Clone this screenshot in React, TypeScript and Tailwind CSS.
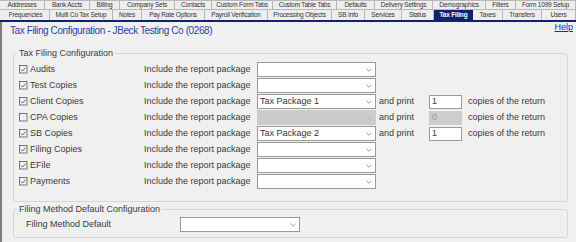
import React from 'react';

const topTabs = [
  { label: 'Addresses', w: 'w-[45px]' },
  { label: 'Bank Accts', w: 'w-[45px]' },
  { label: 'Billing', w: 'w-[30px]' },
  { label: 'Company Sets', w: 'w-[55px]' },
  { label: 'Contacts', w: 'w-[37px]' },
  { label: 'Custom Form Tabs', w: 'w-[61px]' },
  { label: 'Custom Table Tabs', w: 'w-[64px]' },
  { label: 'Defaults', w: 'w-[38px]' },
  { label: 'Delivery Settings', w: 'w-[58px]' },
  { label: 'Demographics', w: 'w-[53px]' },
  { label: 'Filters', w: 'w-[30px]' },
  { label: 'Form 1099 Setup', w: 'w-[60px]' },
];

const bottomTabs = [
  { label: 'Frequencies', w: 'w-[48px]' },
  { label: 'Multi Co Tax Setup', w: 'w-[63px]' },
  { label: 'Notes', w: 'w-[29px]' },
  { label: 'Pay Rate Options', w: 'w-[63px]' },
  { label: 'Payroll Verification', w: 'w-[63px]' },
  { label: 'Processing Objects', w: 'w-[64px]' },
  { label: 'SB Info', w: 'w-[33px]' },
  { label: 'Services', w: 'w-[37px]' },
  { label: 'Status', w: 'w-[32px]' },
  { label: 'Tax Filing', w: 'w-[39px]', active: true },
  { label: 'Taxes', w: 'w-[30px]' },
  { label: 'Transfers', w: 'w-[39px]' },
  { label: 'Users', w: 'w-[34px]' },
];

type Row = { label: string; checked: boolean; pkg?: string; copies?: string; disabled?: boolean };

const rows: Row[] = [
  { label: 'Audits', checked: true },
  { label: 'Test Copies', checked: true },
  { label: 'Client Copies', checked: true, pkg: 'Tax Package 1', copies: '1' },
  { label: 'CPA Copies', checked: false, disabled: true, copies: '0' },
  { label: 'SB Copies', checked: true, pkg: 'Tax Package 2', copies: '1' },
  { label: 'Filing Copies', checked: true },
  { label: 'EFile', checked: true },
  { label: 'Payments', checked: true },
];

const Chevron = ({ light }: { light?: boolean }) => (
  <svg width="6" height="4" viewBox="0 0 6 4" className="shrink-0">
    <path d="M0.5 0.8 L3 3.2 L5.5 0.8" fill="none" stroke={light ? '#b4b4b4' : '#7a7a7a'} strokeWidth="0.8" />
  </svg>
);

const Check = ({ checked }: { checked: boolean }) => (
  <svg width="9" height="9" viewBox="0 0 9 9" className="shrink-0">
    <rect x="0.5" y="0.5" width="7.5" height="7.5" fill="none" stroke="#555" strokeWidth="0.8" />
    {checked && <path d="M2 4.4 L3.6 6 L6.6 2.6" fill="none" stroke="#444" strokeWidth="0.8" />}
  </svg>
);

const Select = ({ value, disabled, w }: { value?: string; disabled?: boolean; w: string }) => (
  <div
    className={`${w} h-[15px] flex items-center justify-between pl-[2px] pr-[3px] border ${
      disabled ? 'bg-[#cccccc] border-[#cccccc]' : 'bg-white border-[#999999]'
    }`}
  >
    <span className="text-[9px] leading-none text-[#333]">{value}</span>
    <Chevron light={disabled} />
  </div>
);

export default function App() {
  return (
    <div className="w-[576px] h-[242px] bg-[#f0f0f0] overflow-hidden font-[family-name:'Liberation_Sans',Arial,sans-serif] text-[#3a3a3a]">
      {/* tab strip */}
      <div className="flex h-[10px] border-t border-b border-[#b8b8b8] bg-[#eeeeee]">
        {topTabs.map((t) => (
          <div
            key={t.label}
            className={`${t.w} shrink-0 border-r border-[#b8b8b8] flex items-center justify-center text-[6.5px] leading-none tracking-[-0.2px] whitespace-nowrap text-[#333]`}
          >
            {t.label}
          </div>
        ))}
      </div>
      <div className="flex h-[10px] bg-[#eeeeee] pl-[2px]">
        <div className="w-[1px] bg-[#0f2272]" />
        {bottomTabs.map((t) => (
          <div
            key={t.label}
            className={`${t.w} shrink-0 flex items-center justify-center text-[6.5px] leading-none tracking-[-0.2px] whitespace-nowrap ${
              t.active ? 'bg-[#0f2272] text-white font-bold' : 'border-r border-[#b8b8b8] text-[#333]'
            }`}
          >
            {t.label}
          </div>
        ))}
      </div>
      <div className="h-[2px] bg-[#0f2272]" />

      {/* page body */}
      <div className="border-l-2 border-[#7d7d7d] h-[220px]">
        <div className="flex justify-between items-start h-[23px]">
          <h1 className="mt-[3px] ml-[8px] text-[10px] leading-[12px] tracking-[-0.4px] text-[#2a44a0]">
            Tax Filing Configuration - JBeck Testing Co (0268)
          </h1>
          <a className="mr-[3px] text-[9px] leading-[10px] text-[#0033cc] underline">Help</a>
        </div>

        <fieldset className="mt-[3px] ml-[11px] w-[555px] border border-[#d6d6d6] rounded-[3px] px-[5px] pt-[3px] pb-[12px]">
          <legend className="ml-[-2px] px-[2px] text-[9px] leading-[11px]">Tax Filing Configuration</legend>
          <div className="flex flex-col gap-[1px]">
            {rows.map((r) => (
              <div key={r.label} className="flex items-center h-[15px] text-[9px] leading-none">
                <div className="w-[125px] flex items-center gap-[2px]">
                  <Check checked={r.checked} />
                  <span>{r.label}</span>
                </div>
                <span className="w-[113px]">Include the report package</span>
                <Select w="w-[119px]" value={r.pkg} disabled={r.disabled} />
                {r.copies && (
                  <>
                    <span className="ml-[3px] w-[50px]">and print</span>
                    <div
                      className={`w-[33px] h-[14px] flex items-center pl-[2px] border ${
                        r.disabled ? 'bg-[#cdcdcd] border-[#cdcdcd] text-[#9a9a9a]' : 'bg-white border-[#999999]'
                      }`}
                    >
                      {r.copies}
                    </div>
                    <span className="ml-[6px]">copies of the return</span>
                  </>
                )}
              </div>
            ))}
          </div>
        </fieldset>

        <fieldset className="mt-[2px] ml-[11px] w-[555px] border border-[#d6d6d6] rounded-[3px] pl-[12px] pt-[2px] pb-[5px]">
          <legend className="ml-[-9px] px-[2px] text-[9px] leading-[11px]">Filing Method Default Configuration</legend>
          <div className="flex items-center text-[9px] leading-none">
            <span className="w-[154px]">Filing Method Default</span>
            <Select w="w-[120px]" />
          </div>
        </fieldset>
      </div>
    </div>
  );
}
